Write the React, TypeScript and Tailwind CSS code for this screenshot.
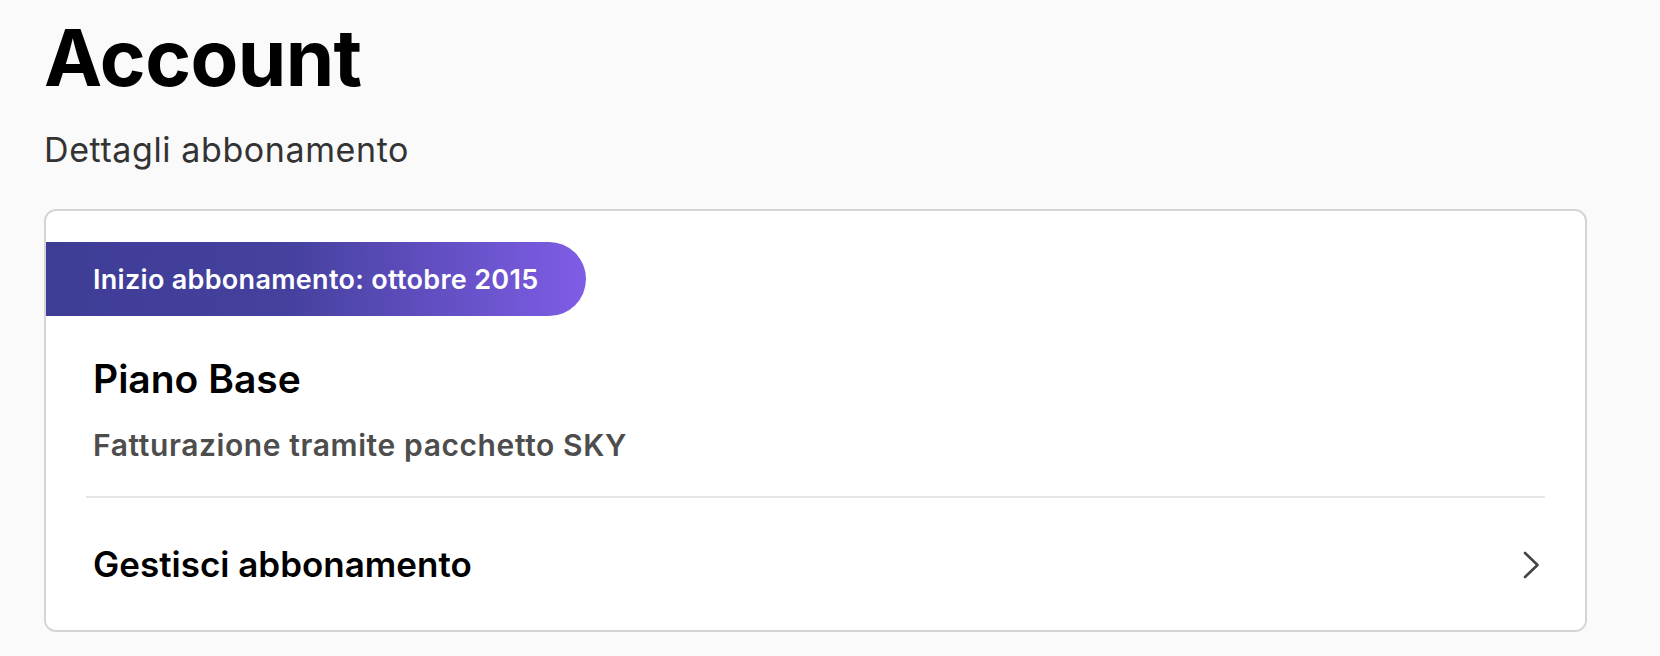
import { useState } from 'react'

/** Thin chevron pointing right, as used on the account rows. */
function ChevronRight() {
  return (
    <svg width="17" height="28" viewBox="0 0 17 28" fill="none" aria-hidden="true">
      <polyline
        points="2,2 14.5,14 2,26"
        stroke="#444444"
        strokeWidth="2.6"
        strokeLinecap="round"
        strokeLinejoin="round"
      />
    </svg>
  )
}

export default function App() {
  const [hover, setHover] = useState(false)

  return (
    <div
      className="min-h-screen bg-[#fafafa] pl-[44px] pr-[73px] pt-[19px] text-black"
      style={{ fontFamily: 'Inter, "Noto Sans", "Liberation Sans", sans-serif' }}
    >
      {/* Page title */}
      <h1 className="text-[78px] font-bold leading-[78px] tracking-[-0.6px]">Account</h1>
      <h2 className="mt-[32px] text-[34px] font-normal leading-[41px] tracking-[0.6px] text-[#333333]">
        Dettagli abbonamento
      </h2>

      {/* Membership card */}
      <section className="mt-[39px] overflow-hidden rounded-[12px] border-2 border-[#d4d4d4] bg-white">
        <div className="mt-[31px] flex h-[74px] w-fit items-center rounded-r-full bg-[linear-gradient(90deg,#3e3d96_0%,#45419e_45%,#7f5de6_100%)] pl-[47px] pr-[48px]">
          <span className="text-[27px] font-semibold leading-none tracking-[0.3px] text-white">
            Inizio abbonamento: ottobre 2015
          </span>
        </div>

        <div className="px-[47px] pb-[32px]">
          <h3 className="mt-[39px] text-[39px] font-semibold leading-[47px]">Piano Base</h3>
          <p className="mt-[25px] text-[30px] font-semibold leading-[37px] tracking-[0.6px] text-[#4d4d4d]">
            Fatturazione tramite pacchetto SKY
          </p>
        </div>

        <div className="mx-[40px] h-[2px] bg-[#e6e6e6]" />

        <button
          type="button"
          onMouseEnter={() => setHover(true)}
          onMouseLeave={() => setHover(false)}
          className={`flex w-full items-center justify-between pt-[45px] pb-[44px] pl-[47px] pr-[45px] text-left ${
            hover ? 'bg-[#fcfcfc]' : 'bg-white'
          }`}
        >
          <span className="text-[35px] font-semibold leading-[43px]">Gestisci abbonamento</span>
          <ChevronRight />
        </button>
      </section>
    </div>
  )
}
